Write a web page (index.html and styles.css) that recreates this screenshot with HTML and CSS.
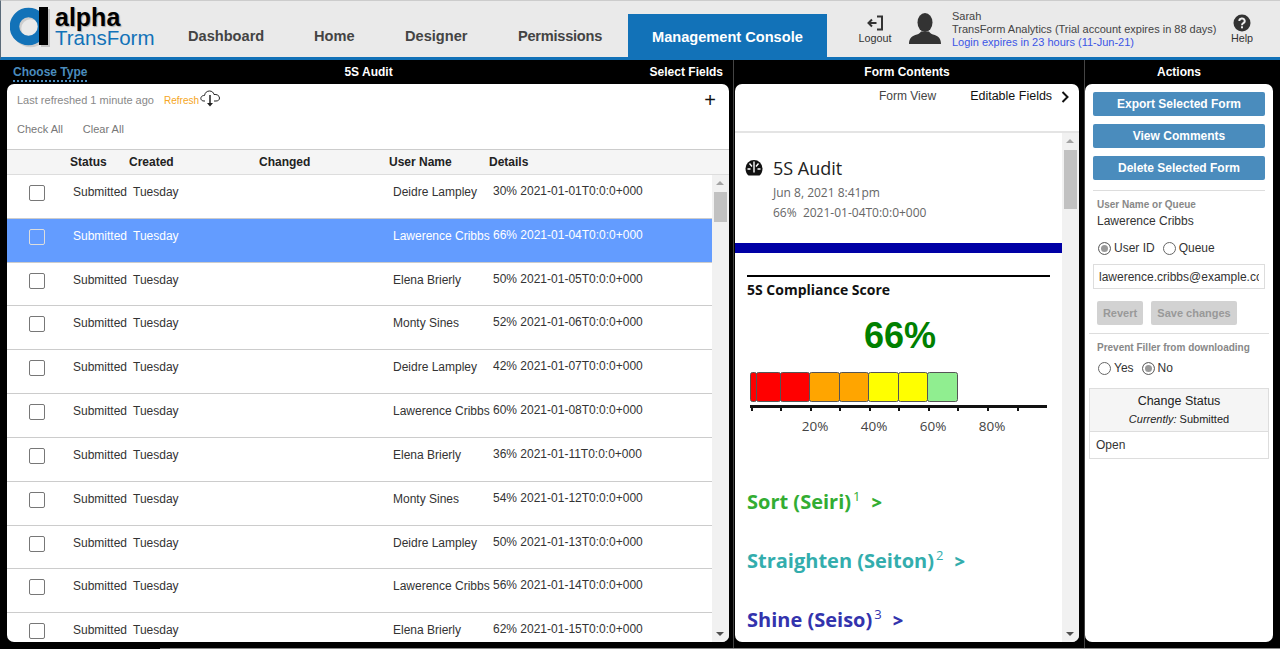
FILE: index.html
```html
<!DOCTYPE html>
<html lang="en">
<head>
    <meta charset="UTF-8">
    <meta name="viewport" content="width=device-width, initial-scale=1.0">
    <title>Alpha TransForm - Management Console</title>
    <link rel="stylesheet" href="styles.css">
</head>
<body>
    <header class="topbar">
        <div class="logo">
            <svg class="logo-mark" width="42" height="42" viewBox="0 0 42 42">
                <circle cx="20.500" cy="21.500" r="14" fill="none" stroke="#000" stroke-opacity="0.12" stroke-width="9.500"/>
                <rect x="31" y="2" width="9" height="38" fill="#c4c4c4"/>
                <circle cx="18.500" cy="19.500" r="14" fill="none" stroke="#1272b8" stroke-width="9.500"/>
                <rect x="29" y="0" width="9" height="38" fill="#000"/>
            </svg>
            <div class="logo-text">
                <span class="logo-alpha">alpha</span>
                <span class="logo-name">TransForm</span>
            </div>
        </div>
        <nav class="nav">
            <a class="nav-item nav-dashboard">Dashboard</a>
            <a class="nav-item nav-home">Home</a>
            <a class="nav-item nav-designer">Designer</a>
            <a class="nav-item nav-permissions">Permissions</a>
            <a class="nav-item nav-active">Management Console</a>
        </nav>
        <div class="topbar-tool logout">
            <svg width="18" height="18" viewBox="0 0 18 18" fill="none" stroke="#333" stroke-width="2">
                <path d="M11 2.500h5v13h-5"/>
                <path d="M10.500 9H2.500M6 5.500L2.500 9 6 12.500"/>
            </svg>
            <span>Logout</span>
        </div>
        <svg class="avatar" width="32" height="32" viewBox="0 0 32 32" fill="#333">
            <ellipse cx="16" cy="9.500" rx="7.500" ry="9.500"/>
            <path d="M0 31c0-6 3-8 8-9.500 2-.7 3-1.500 4-3h8c1 1.500 2 2.300 4 3 5 1.500 8 3.500 8 9.500z"/>
        </svg>
        <div class="account">
            <div>Sarah</div>
            <div>TransForm Analytics (Trial account expires in 88 days)</div>
            <div class="account-login">Login expires in 23 hours (11-Jun-21)</div>
        </div>
        <div class="topbar-tool help">
            <svg width="18" height="18" viewBox="0 0 18 18">
                <circle cx="9" cy="9" r="8.500" fill="#333"/>
                <path d="M6.300 7a2.700 2.500 0 1 1 4 2.200c-.9.500-1.300 1-1.300 2" fill="none" stroke="#eee" stroke-width="1.900"/>
                <rect x="8" y="12.300" width="2" height="2" fill="#eee"/>
            </svg>
            <span>Help</span>
        </div>
    </header>

    <main class="workspace">
        <section class="col col-list">
            <div class="col-title">
                <a class="choose-type">Choose Type</a>
                <span>5S Audit</span>
                <span>Select Fields</span>
            </div>
            <div class="panel list-panel">
                <div class="refresh-row">
                    <span class="muted">Last refreshed 1 minute ago</span>
                    <span class="refresh-link">Refresh</span>
                    <svg class="cloud" width="20" height="17" viewBox="0 0 20 17" fill="none" stroke="#222">
                        <path d="M5 11H4C1 11 .5 8.500 1 7.500 1.700 5.800 3 5.500 4.500 5.500 5 2.500 7 1 9.500 1c2.500 0 4 1.500 4.500 3.500 2.500-.5 5.500 1 5.500 3.500 0 2-1.500 3-3.500 3h-2"/>
                        <path d="M10 5v10" stroke-width="1.500"/>
                        <path d="M7 13h6l-3 3.500z" fill="#222" stroke="none"/>
                    </svg>
                    <span class="plus">+</span>
                </div>
                <div class="check-row">
                    <span>Check All</span>
                    <span>Clear All</span>
                </div>
                <div class="list-head">
                    <span class="h-status">Status</span>
                    <span>Created</span>
                    <span>Changed</span>
                    <span>User Name</span>
                    <span>Details</span>
                </div>
                <div class="list-scroll">
                    <div class="rows">
                        <div class="row"><span class="box"></span><span>Submitted</span><span>Tuesday</span><span></span><span>Deidre Lampley</span><span class="details">30% 2021-01-01T0:0:0+000</span></div>
                        <div class="row row-selected"><span class="box"></span><span>Submitted</span><span>Tuesday</span><span></span><span>Lawerence Cribbs</span><span class="details">66% 2021-01-04T0:0:0+000</span></div>
                        <div class="row"><span class="box"></span><span>Submitted</span><span>Tuesday</span><span></span><span>Elena Brierly</span><span class="details">50% 2021-01-05T0:0:0+000</span></div>
                        <div class="row"><span class="box"></span><span>Submitted</span><span>Tuesday</span><span></span><span>Monty Sines</span><span class="details">52% 2021-01-06T0:0:0+000</span></div>
                        <div class="row"><span class="box"></span><span>Submitted</span><span>Tuesday</span><span></span><span>Deidre Lampley</span><span class="details">42% 2021-01-07T0:0:0+000</span></div>
                        <div class="row"><span class="box"></span><span>Submitted</span><span>Tuesday</span><span></span><span>Lawerence Cribbs</span><span class="details">60% 2021-01-08T0:0:0+000</span></div>
                        <div class="row"><span class="box"></span><span>Submitted</span><span>Tuesday</span><span></span><span>Elena Brierly</span><span class="details">36% 2021-01-11T0:0:0+000</span></div>
                        <div class="row"><span class="box"></span><span>Submitted</span><span>Tuesday</span><span></span><span>Monty Sines</span><span class="details">54% 2021-01-12T0:0:0+000</span></div>
                        <div class="row"><span class="box"></span><span>Submitted</span><span>Tuesday</span><span></span><span>Deidre Lampley</span><span class="details">50% 2021-01-13T0:0:0+000</span></div>
                        <div class="row"><span class="box"></span><span>Submitted</span><span>Tuesday</span><span></span><span>Lawerence Cribbs</span><span class="details">56% 2021-01-14T0:0:0+000</span></div>
                        <div class="row"><span class="box"></span><span>Submitted</span><span>Tuesday</span><span></span><span>Elena Brierly</span><span class="details">62% 2021-01-15T0:0:0+000</span></div>
                    </div>
                    <div class="scrollbar">
                        <span class="arrow-up"></span>
                        <span class="thumb thumb-list"></span>
                        <span class="arrow-down"></span>
                    </div>
                </div>
            </div>
        </section>

        <section class="col col-form">
            <div class="col-title col-title-single">Form Contents</div>
            <div class="panel form-panel">
                <div class="form-tabs">
                    <span class="tab-view">Form View</span>
                    <span class="tab-fields">Editable Fields</span>
                    <svg width="8" height="12" viewBox="0 0 8 12" fill="none" stroke="#111" stroke-width="2"><path d="M1.500 1l5 5-5 5"/></svg>
                </div>
                <div class="form-scroll">
                    <div class="form-body">
                        <div class="form-heading">
                            <svg class="gauge" width="18" height="17" viewBox="0 0 18 17">
                                <path d="M3.500 16.500C1.500 15 .5 12 .5 9.500a8.500 8.500 0 0 1 17 0c0 2.500-1 5.500-3 7z" fill="#111"/>
                                <path d="M9 2.500v11M4.500 4.500l2.500 3M13.500 4.500l-2.500 3M2.500 10h3M12.500 10h3" stroke="#fff" stroke-width="1.400"/>
                            </svg>
                            <div>
                                <h2 class="form-title">5S Audit</h2>
                                <div class="form-meta">Jun 8, 2021 8:41pm</div>
                                <div class="form-meta">66%&nbsp; 2021-01-04T0:0:0+000</div>
                            </div>
                        </div>
                        <div class="blue-band"></div>
                        <div class="score">
                            <h3 class="score-title">5S Compliance Score</h3>
                            <div class="score-value">66%</div>
                            <svg class="score-chart" width="304" height="66" viewBox="0 0 304 66">
                                <g stroke="#555" stroke-width="1">
                                    <rect x="3.500" y="0.500" width="6" height="29" rx="2" fill="#f00"/>
                                    <rect x="9.500" y="0.500" width="24" height="29" rx="2" fill="#f00"/>
                                    <rect x="33.500" y="0.500" width="29" height="29" rx="2" fill="#f00"/>
                                    <rect x="62.500" y="0.500" width="30" height="29" rx="2" fill="#ffa500"/>
                                    <rect x="92.500" y="0.500" width="29" height="29" rx="2" fill="#ffa500"/>
                                    <rect x="121.500" y="0.500" width="30" height="29" rx="2" fill="#ff0"/>
                                    <rect x="151.500" y="0.500" width="29" height="29" rx="2" fill="#ff0"/>
                                    <rect x="180.500" y="0.500" width="30" height="29" rx="2" fill="#90ee90"/>
                                </g>
                                <path d="M3 34.500h297" stroke="#111" stroke-width="3"/>
                                <path d="M5 34v5M34 34v5M64 34v5M93 34v5M123 34v5M152 34v5M182 34v5M211 34v5M241 34v5M271 34v5" stroke="#111" stroke-width="2"/>
                                <g class="chart-label">
                                    <text x="68" y="59">20%</text>
                                    <text x="127" y="59">40%</text>
                                    <text x="186" y="59">60%</text>
                                    <text x="245" y="59">80%</text>
                                </g>
                            </svg>
                        </div>
                        <div class="step step-sort">Sort (Seiri)<sup>1</sup><b>&gt;</b></div>
                        <div class="step step-straighten">Straighten (Seiton)<sup>2</sup><b>&gt;</b></div>
                        <div class="step step-shine">Shine (Seiso)<sup>3</sup><b>&gt;</b></div>
                    </div>
                    <div class="scrollbar">
                        <span class="arrow-up"></span>
                        <span class="thumb thumb-form"></span>
                        <span class="arrow-down"></span>
                    </div>
                </div>
            </div>
        </section>

        <section class="col col-actions">
            <div class="col-title col-title-single">Actions</div>
            <div class="panel actions-panel">
                <div class="action-buttons">
                    <button class="btn-action" type="button">Export Selected Form</button>
                    <button class="btn-action" type="button">View Comments</button>
                    <button class="btn-action" type="button">Delete Selected Form</button>
                </div>
                <div class="user-block">
                    <div class="field-label">User Name or Queue</div>
                    <div class="field-value">Lawerence Cribbs</div>
                    <div class="radios">
                        <span class="radio radio-on"></span><span class="radio-text">User ID</span>
                        <span class="radio"></span><span>Queue</span>
                    </div>
                    <input class="user-input" type="text" value="lawerence.cribbs@example.com">
                    <div class="save-row">
                        <span class="btn-disabled btn-revert">Revert</span>
                        <span class="btn-disabled btn-save">Save changes</span>
                    </div>
                </div>
                <div class="filler-block">
                    <div class="field-label">Prevent Filler from downloading</div>
                    <div class="radios">
                        <span class="radio"></span><span class="radio-text">Yes</span>
                        <span class="radio radio-on"></span><span>No</span>
                    </div>
                </div>
                <div class="status-box">
                    <div class="status-head">
                        <div class="status-title">Change Status</div>
                        <div class="status-current"><i>Currently:</i> Submitted</div>
                    </div>
                    <div class="status-option">Open</div>
                </div>
            </div>
        </section>
    </main>
    <div class="bottom-edge"></div>
</body>
</html>
```

FILE: styles.css
```css
* {
    box-sizing: border-box;
}

html, body {
    height: 100%;
}

body {
    margin: 0;
    overflow: hidden;
    display: flex;
    flex-direction: column;
    background-color: #000;
    color: #333;
    font-family: "Liberation Sans", Arial, sans-serif;
    font-size: 12px;
}

/* top bar */
.topbar {
    height: 60px;
    flex: none;
    display: flex;
    background-color: #eaeaea;
    border-top: 1px solid #ccc;
    border-left: 1px solid #5a6a78;
    border-bottom: 3px solid #1272b8;
}

.logo {
    width: 167px;
    flex: none;
    display: flex;
    padding: 6px 0 0 9px;
}

.logo-mark {
    flex: none;
    margin: 0 3px 0 0;
}

.logo-text {
    display: flex;
    flex-direction: column;
}

.logo-alpha {
    color: #000;
    font-size: 25px;
    font-weight: bold;
    line-height: 21px;
    text-shadow: 1px 1px 1px #aaa;
}

.logo-name {
    color: #1272b8;
    font-size: 20.500px;
    line-height: 19px;
}

.nav {
    display: flex;
    width: 660px;
    flex: none;
    align-items: stretch;
}

.nav-item {
    color: #444;
    font-size: 14.600px;
    font-weight: bold;
    padding: 0 0 0 20px;
    line-height: 71px;
    height: 56px;
    overflow: hidden;
}

.nav-dashboard {
    width: 126px;
}

.nav-home {
    width: 91px;
}

.nav-designer {
    width: 113px;
}

.nav-permissions {
    width: 130px;
    letter-spacing: -0.25px;
}

.nav-active {
    width: 199px;
    margin-top: 13px;
    height: 43px;
    padding-left: 24px;
    line-height: 46px;
    background-color: #1272b8;
    color: #fff;
}

.topbar-tool {
    flex: none;
    display: flex;
    flex-direction: column;
    align-items: center;
    font-size: 10.800px;
    color: #333;
    padding-top: 13px;
}

.logout {
    margin-left: 29px;
    width: 36px;
}

.help {
    margin-left: 1px;
    width: 34px;
}

.avatar {
    flex: none;
    margin: 12px 0 0 16px;
}

.account {
    flex: none;
    width: 272px;
    margin-left: 11px;
    padding-top: 9px;
    font-size: 11px;
    line-height: 13px;
    color: #444;
}

.account-login {
    color: #3b55e6;
}

/* three columns */
.workspace {
    flex: 1;
    min-height: 0;
    display: grid;
    grid-template-columns: 734px 351px minmax(0, 1fr);
}

.col {
    display: flex;
    flex-direction: column;
    min-height: 0;
    padding-bottom: 6px;
}

.col-list {
    padding-left: 7px;
    padding-right: 4px;
    border-right: 1px solid #444;
}

.col-form {
    padding-left: 1px;
    padding-right: 5px;
    border-right: 1px solid #444;
}

.col-actions {
    padding-right: 7px;
}

.col-title {
    height: 24px;
    flex: none;
    display: flex;
    justify-content: space-between;
    align-items: center;
    padding: 0 6px;
    color: #fff;
    font-weight: bold;
}

.col-title-single {
    justify-content: center;
}

.choose-type {
    color: #4a8cbd;
    border-bottom: 2px dotted #4a8cbd;
    padding-top: 1px;
    line-height: 15px;
    margin-bottom: -1px;
}

.panel {
    flex: 1;
    min-height: 0;
    display: flex;
    flex-direction: column;
    background-color: #fff;
    border-radius: 7px;
    overflow: hidden;
}

.bottom-edge {
    height: 1px;
    flex: none;
    margin-left: 160px;
    background-color: #8a8a8a;
}

/* list panel */
.refresh-row {
    height: 32px;
    flex: none;
    display: flex;
    align-items: center;
    padding: 0 13px 0 10px;
    font-size: 11px;
}

.muted {
    color: #888;
}

.refresh-link {
    color: #f5a623;
    font-size: 10px;
    margin-left: 10px;
}

.cloud {
    margin: -3px 0 0 1px;
}

.plus {
    margin-left: auto;
    font-size: 20px;
    color: #111;
    line-height: 20px;
}

.check-row {
    height: 33px;
    flex: none;
    display: flex;
    gap: 20px;
    align-items: center;
    padding: 0 0 7px 10px;
    font-size: 11px;
    color: #777;
}

.list-head {
    height: 26px;
    flex: none;
    display: grid;
    grid-template-columns: 122px 130px 130px 100px 1fr;
    align-items: center;
    background-color: #f5f5f5;
    border-top: 1px solid #ccc;
    border-bottom: 1px solid #ddd;
    color: #222;
    font-weight: bold;
}

.h-status {
    margin-left: 63px;
}

.list-scroll {
    flex: 1;
    min-height: 0;
    display: flex;
}

.rows {
    flex: 1;
    min-width: 0;
    overflow: hidden;
}

.row {
    height: 43.830px;
    display: grid;
    grid-template-columns: 66px 60px 260px 0 100px 1fr;
    align-items: start;
    padding-top: 10px;
    border-bottom: 1px solid #ccc;
    color: #333;
    white-space: nowrap;
}

.row > span {
    line-height: 14px;
}

.row .box {
    width: 16px;
    height: 16px;
    margin: 0 0 0 22px;
    border: 1px solid #777;
    border-radius: 2px;
    background-color: #fff;
}

.row-selected {
    background-color: #639cff;
    color: #fff;
}

.row-selected .box {
    background-color: #639cff;
    border-color: #ddd;
}

.details {
    margin-top: -1px;
}

.scrollbar {
    width: 17px;
    flex: none;
    position: relative;
    background-color: #f1f1f1;
}

.arrow-up, .arrow-down {
    position: absolute;
    left: 4px;
    width: 0;
    height: 0;
    border-left: 4px solid transparent;
    border-right: 4px solid transparent;
}

.arrow-up {
    top: 6px;
    border-bottom: 4px solid #a3a3a3;
}

.arrow-down {
    bottom: 6px;
    border-top: 4px solid #505050;
}

.thumb {
    position: absolute;
    left: 2px;
    width: 13px;
    background-color: #c1c1c1;
}

.thumb-list {
    top: 17px;
    height: 30px;
}

.thumb-form {
    top: 17px;
    height: 59px;
}

/* form panel */
.form-tabs {
    height: 49px;
    flex: none;
    display: flex;
    align-items: flex-start;
    padding: 5px 9px 0 144px;
    border-bottom: 2px solid #e4e4e4;
    white-space: nowrap;
}

.tab-view {
    color: #444;
}

.tab-fields {
    color: #111;
    font-size: 12.500px;
    margin-left: 34px;
    margin-right: 9px;
}

.form-tabs svg {
    flex: none;
    margin-top: 2px;
}

.form-scroll {
    flex: 1;
    min-height: 0;
    display: flex;
}

.form-body {
    flex: 1;
    min-width: 0;
    overflow: hidden;
    font-family: "Open Sans", sans-serif;
}

.form-heading {
    display: flex;
    padding: 22px 0 0 10px;
    height: 110px;
}

.gauge {
    margin: 4px 10px 0 0;
}

.form-title {
    margin: 0;
    font-size: 18px;
    font-weight: normal;
    line-height: 26px;
    color: #222;
}

.form-meta {
    font-size: 12px;
    line-height: 20px;
    color: #666;
}

.form-meta:first-of-type {
    margin-top: 2px;
}

.blue-band {
    height: 10px;
    background-color: #0000a5;
}

.score {
    margin: 22px 12px 0 12px;
    border-top: 2px solid #000;
}

.score-title {
    margin: 3px 0 0;
    font-size: 14px;
    line-height: 20px;
    color: #111;
}

.score-value {
    font-family: "Liberation Sans", Arial, sans-serif;
    font-size: 36px;
    font-weight: bold;
    line-height: 46px;
    color: #008000;
    text-align: center;
    margin-top: 13px;
    padding-left: 3px;
}

.score-chart {
    display: block;
    margin-top: 13px;
}

.chart-label {
    font-size: 13.500px;
    fill: #444;
    text-anchor: middle;
}

.step {
    margin: 0 0 0 12px;
    height: 59px;
    font-size: 20px;
    font-weight: bold;
    line-height: 28px;
    white-space: nowrap;
}

.step sup {
    font-size: 13px;
    font-weight: normal;
    line-height: 0;
    vertical-align: 8px;
    margin-left: 2px;
}

.step b {
    font-size: 18px;
    margin-left: 11px;
}

.step-sort {
    color: #33ad33;
    margin-top: 50px;
}

.step-straighten {
    color: #33adad;
}

.step-shine {
    color: #3333ad;
}

/* actions panel */
.action-buttons {
    display: flex;
    flex-direction: column;
    gap: 8px;
    padding: 8px 8px 10px;
}

.btn-action {
    height: 24px;
    padding: 0;
    border: none;
    border-radius: 2px;
    background-color: #4a8cbd;
    color: #fff;
    font-family: inherit;
    font-size: 12px;
    font-weight: bold;
}

.user-block {
    margin: 0 8px;
    padding: 8px 4px 0;
    border-top: 1px solid #ddd;
    height: 143px;
}

.field-label {
    color: #888;
    font-size: 10px;
    font-weight: bold;
    line-height: 12px;
}

.field-value {
    margin-top: 3px;
    line-height: 14px;
    color: #333;
}

.radios {
    display: flex;
    align-items: center;
    height: 16px;
    margin-top: 12px;
    padding-left: 1px;
    color: #333;
}

.radio {
    flex: none;
    width: 13px;
    height: 13px;
    margin-right: 3px;
    border: 1px solid #666;
    border-radius: 50%;
    background-color: #fff;
}

.radio-on {
    background-color: #999;
    box-shadow: inset 0 0 0 2px #fff;
}

.radio-text {
    margin-right: 8px;
}

.user-input {
    display: block;
    width: 172px;
    height: 25px;
    margin: 8px 0 0 -4px;
    padding: 0 5px;
    border: 1px solid #ddd;
    font-family: inherit;
    font-size: 12px;
    color: #333;
    outline: none;
}

.save-row {
    display: flex;
    gap: 8px;
    margin-top: 12px;
}

.btn-disabled {
    height: 24px;
    line-height: 24px;
    text-align: center;
    border-radius: 2px;
    background-color: #d2d2d2;
    color: #999;
    font-size: 11px;
    font-weight: bold;
}

.btn-revert {
    width: 46px;
}

.btn-save {
    width: 86px;
}

.filler-block {
    margin: 0 4px;
    padding: 8px 8px 0;
    border-top: 1px solid #ddd;
    height: 55px;
}

.filler-block .radios {
    margin-top: 6px;
}

.status-box {
    margin: 0 4px;
    border: 1px solid #ddd;
}

.status-head {
    height: 43px;
    padding-top: 5px;
    background-color: #f5f5f5;
    border-bottom: 1px solid #ddd;
    text-align: center;
}

.status-title {
    font-size: 12.500px;
    line-height: 15px;
    color: #222;
}

.status-current {
    margin-top: 4px;
    font-size: 11px;
    line-height: 13px;
    color: #222;
}

.status-option {
    height: 26px;
    padding: 6px 6px 0;
    line-height: 14px;
    color: #333;
}
```
